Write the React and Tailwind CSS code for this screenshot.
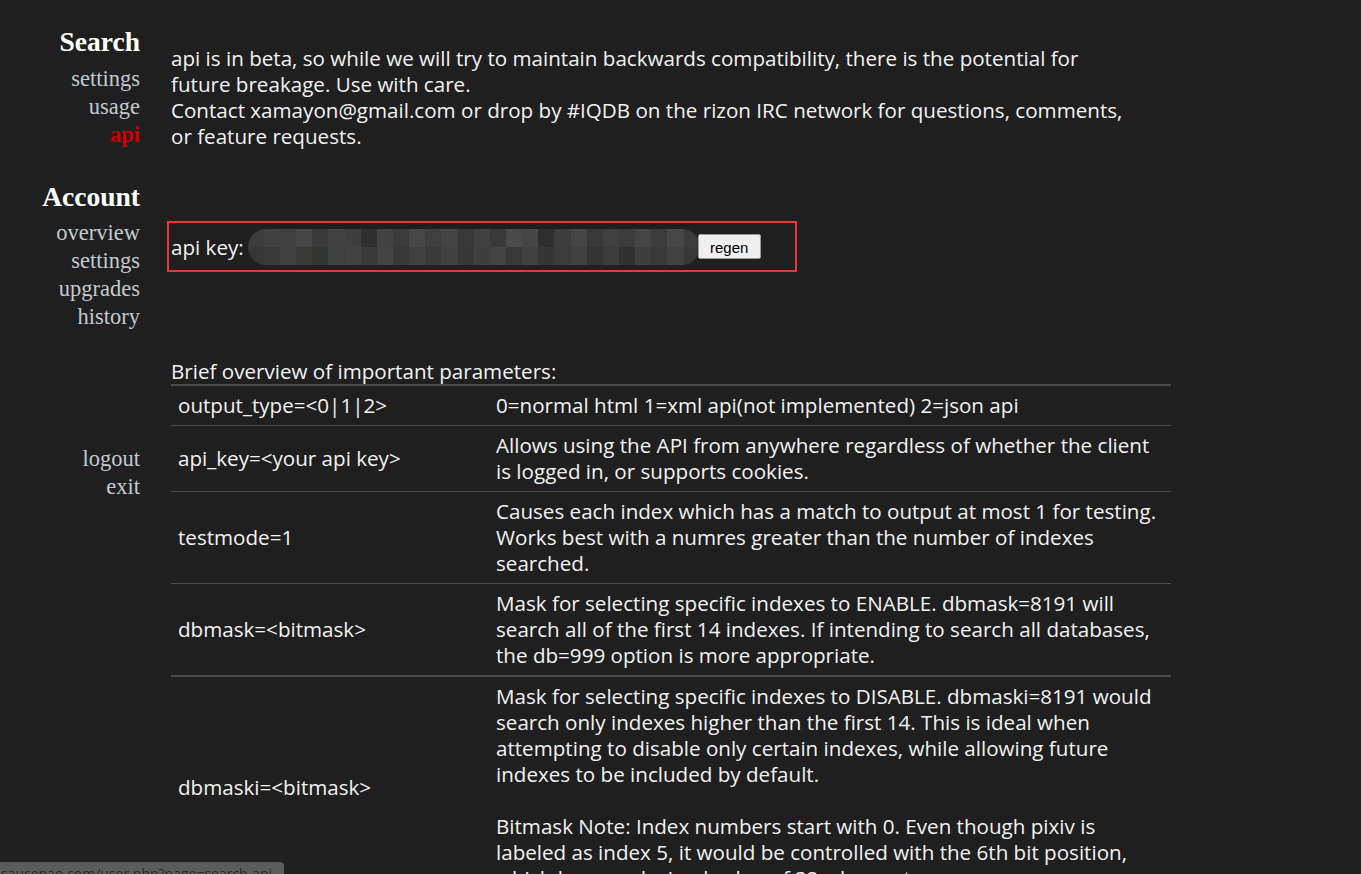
const navLink = "block leading-[28px] text-[22.5px] text-[#c3cad2]";

const mosaicTop = [
  "bg-[#3b3b3b]", "bg-[#414141]", "bg-[#3d3f40]", "bg-[#454545]", "bg-[#3a3a38]",
  "bg-[#404244]", "bg-[#3e3e3e]", "bg-[#2f2f2f]", "bg-[#434343]", "bg-[#3c3c3c]",
  "bg-[#474747]", "bg-[#3f3f41]", "bg-[#444444]", "bg-[#393939]", "bg-[#414143]",
  "bg-[#3a3a3a]", "bg-[#4a4a4a]", "bg-[#444648]", "bg-[#2e2e2e]", "bg-[#3d3d3d]",
  "bg-[#434547]", "bg-[#393939]", "bg-[#404040]", "bg-[#3c3c3c]", "bg-[#454545]",
  "bg-[#3a3c3d]", "bg-[#474747]", "bg-[#3b3b3b]",
];
const mosaicBottom = [
  "bg-[#363636]", "bg-[#3a3a3a]", "bg-[#404040]", "bg-[#393a38]", "bg-[#343634]",
  "bg-[#3d3f41]", "bg-[#424242]", "bg-[#3a3a3a]", "bg-[#444444]", "bg-[#363839]",
  "bg-[#3f3f3f]", "bg-[#3a3a3a]", "bg-[#414141]", "bg-[#373737]", "bg-[#3e3e3e]",
  "bg-[#444444]", "bg-[#393939]", "bg-[#3f4142]", "bg-[#353535]", "bg-[#3b3b3b]",
  "bg-[#404040]", "bg-[#333333]", "bg-[#3c3c3c]", "bg-[#2f3031]", "bg-[#3e3e3e]",
  "bg-[#393939]", "bg-[#424242]", "bg-[#383838]",
];

const params = [
  {
    name: "output_type=<0|1|2>",
    lines: ["0=normal html 1=xml api(not implemented) 2=json api"],
  },
  {
    name: "api_key=<your api key>",
    lines: [
      "Allows using the API from anywhere regardless of whether the client",
      "is logged in, or supports cookies.",
    ],
  },
  {
    name: "testmode=1",
    lines: [
      "Causes each index which has a match to output at most 1 for testing.",
      "Works best with a numres greater than the number of indexes",
      "searched.",
    ],
  },
  {
    name: "dbmask=<bitmask>",
    lines: [
      "Mask for selecting specific indexes to ENABLE. dbmask=8191 will",
      "search all of the first 14 indexes. If intending to search all databases,",
      "the db=999 option is more appropriate.",
    ],
  },
  {
    name: "dbmaski=<bitmask>",
    thick: true,
    lines: [
      "Mask for selecting specific indexes to DISABLE. dbmaski=8191 would",
      "search only indexes higher than the first 14. This is ideal when",
      "attempting to disable only certain indexes, while allowing future",
      "indexes to be included by default.",
      "",
      "Bitmask Note: Index numbers start with 0. Even though pixiv is",
      "labeled as index 5, it would be controlled with the 6th bit position,",
      "which bears a decimal value of 32 when set.",
    ],
  },
];

const App = () => {
  return (
    <div className="min-h-screen bg-[#1f1f1f] flex text-[#f2f2f2] overflow-hidden">
      {/* Sidebar */}
      <nav className="w-[140px] shrink-0 text-right pt-[27px] font-['Liberation_Serif','Times_New_Roman',serif]">
        <h2 className="font-bold text-[27.5px] leading-[30px] text-white">Search</h2>
        <div className="mt-[8px]">
          <a className={navLink}>settings</a>
          <a className={navLink}>usage</a>
          <a className="block leading-[28px] text-[22.5px] font-bold text-[#cc0000]">api</a>
        </div>
        <h2 className="mt-[33px] font-bold text-[27.5px] leading-[30px] text-white">Account</h2>
        <div className="mt-[7px]">
          <a className={navLink}>overview</a>
          <a className={navLink}>settings</a>
          <a className={navLink}>upgrades</a>
          <a className={navLink}>history</a>
        </div>
        <div className="mt-[114px]">
          <a className={navLink}>logout</a>
          <a className={navLink}>exit</a>
        </div>
      </nav>

      {/* Main content */}
      <main className="ml-[31px] pt-[45px] w-[1000px] font-['Open_Sans','Noto_Sans',sans-serif] text-[20.6px] leading-[26px]">
        <p>
          api is in beta, so while we will try to maintain backwards compatibility, there is the potential for
          <br />
          future breakage. Use with care.
          <br />
          Contact xamayon@gmail.com or drop by #IQDB on the rizon IRC network for questions, comments,
          <br />
          or feature requests.
        </p>

        <div className="mt-[72px] -ml-[4px] w-[630px] h-[51px] border-2 border-[#e8383b] flex items-center pl-[2px]">
          <span className="whitespace-nowrap">api key:</span>
          <div className="ml-[4px] w-[452px] h-[36px] rounded-[18px] overflow-hidden flex flex-col">
            <div className="flex h-1/2">
              {mosaicTop.map((c, i) => (
                <div key={i} className={`flex-1 ${c}`} />
              ))}
            </div>
            <div className="flex h-1/2">
              {mosaicBottom.map((c, i) => (
                <div key={i} className={`flex-1 ${c}`} />
              ))}
            </div>
          </div>
          <button className="-ml-[2px] w-[63px] h-[25px] bg-[#efefef] border border-[#9a9a9a] rounded-[2px] text-black text-[15px] font-['Liberation_Sans',Arial,sans-serif]">
            regen
          </button>
        </div>

        <p className="mt-[86px]">Brief overview of important parameters:</p>
        <div className="border-t-2 border-[#4a4a4a]">
          {params.map((p) => (
            <div
              key={p.name}
              className={`grid grid-cols-[325px_1fr] ${p.thick ? "border-t-2" : "border-t"} border-[#4a4a4a] first:border-t-0`}
            >
              <div className="flex items-center px-[7px] pt-[6px] pb-[7px] whitespace-nowrap">{p.name}</div>
              <div className="pt-[6px] pb-[7px]">
                {p.lines.map((l, i) => (
                  <div key={i} className="h-[26px] whitespace-nowrap">
                    {l}
                  </div>
                ))}
              </div>
            </div>
          ))}
        </div>
      </main>

      {/* Status bar */}
      <div className="fixed bottom-0 left-0 w-[284px] h-[12px] bg-[#5c5c5c] rounded-tr-[4px] overflow-hidden">
        <div className="text-[14px] leading-[14px] pt-[5px] pl-[1px] text-[#2a2a2a] whitespace-nowrap font-['Open_Sans',sans-serif]">
          saucenao.com/user.php?page=search-api
        </div>
      </div>
    </div>
  );
};

export default App;
